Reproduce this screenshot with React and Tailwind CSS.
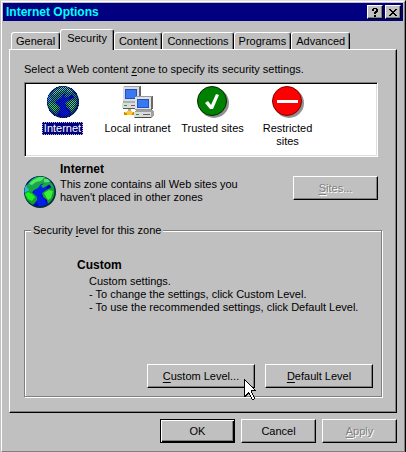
import React, { useState } from 'react';
import clsx from 'clsx';

const tabs = ['General', 'Security', 'Content', 'Connections', 'Programs', 'Advanced'];

const Globe = ({ selected = false }) => (
  <svg width="32" height="32" viewBox="0 0 32 32" aria-hidden="true">
    <defs>
      <pattern id="dither" width="2" height="2" patternUnits="userSpaceOnUse">
        <path d="M0 0h1v1H0zM1 1h1v1H1z" fill="#000080" />
      </pattern>
      <clipPath id="globe-clip">
        <circle cx="15.5" cy="15.5" r="15" />
      </clipPath>
    </defs>
    <circle cx="16" cy="16" r="16" fill="#003030" />
    <circle cx="15.5" cy="15.5" r="15" fill="#0000c0" />
    <g clipPath="url(#globe-clip)">
      <path d="M17 8l5 2 1 3-4 3-2 4 4 4 2 5-8 2-3-7-2-4 0-6 3-5z" fill="#0020e8" />
      <path d="M0 9l5 0 4 3-2 4-7 1z" fill="#30b8d8" />
      <path d="M2 10l5-6 6-4 8 0 7 4-4 3-7 1-3 4-4 2-3 4-4-1 2-3z" fill="#18a848" />
      <path d="M5 8l4-4 6-3 6 0-4 4-5 1-4 3z" fill="#50e860" />
      <path d="M20 3l4 0 3 3-3 1-4-1z" fill="#60d880" />
      <path d="M0 18l3-3 5 1 3 3 2 2 0 3-2 3-2 2-4-2-5-5z" fill="#10a030" />
      <path d="M1 18l3-2 4 2 3 3-3 4-4-2z" fill="#20f020" />
      <path d="M17 10l3-3 5-1 1 2-3 2-4 2z" fill="#18a848" />
      <path d="M18 17l4-3 6-3 4 3 0 8-5 6-3 1-1-5-4-3z" fill="#18a030" />
      <path d="M20 17l5-3 4 1-2 7-3 2-2-3z" fill="#38f038" />
      <path d="M25 5l5 4 1 4-3-1-3-4z" fill="#18a848" />
    </g>
    {selected && <circle cx="16" cy="16" r="16" fill="url(#dither)" shapeRendering="crispEdges" />}
  </svg>
);

const Intranet = () => (
  <svg width="32" height="32" viewBox="0 0 32 32" shapeRendering="crispEdges" aria-hidden="true">
    <path d="M1 1l2-1h15l1 1v13l-2 2H1z" fill="#a0a0a0" />
    <path d="M1 1h16v14H1z" fill="#dcdcdc" />
    <path d="M17 1l2-1v14l-2 2z" fill="#686868" />
    <path d="M3 3h12v10H3z" fill="#2050c8" />
    <path d="M4 4h10v8H4z" fill="#3878f0" />
    <path d="M0 17l2-2h17v7H0z" fill="#b0b0b0" />
    <path d="M0 17h16v5H0z" fill="#dcdcdc" />
    <path d="M0 22h17v1H1z" fill="#585858" />
    <path d="M2 19h3v1H2z" fill="#18a040" />
    <path d="M9 19h6v1H9z" fill="#606060" />
    <path d="M6 23h3v3H6z" fill="#a8a8a8" />
    <path d="M2 26h10v3H2z" fill="#c89000" />
    <path d="M3 26h8v1H3zM5 25h5v4H5z" fill="#ffc830" />
    <path d="M13 11l2-1h15l1 1v11l-2 2H13z" fill="#989898" />
    <path d="M13 11h16v12H13z" fill="#e0e0e0" />
    <path d="M29 11l2-1v12l-2 2z" fill="#686868" />
    <path d="M15 13h12v9H15z" fill="#2050c8" />
    <path d="M16 14h10v7H16z" fill="#3878f0" />
    <path d="M12 26l3-2h15l2 1v4l-3 3H12z" fill="#a0a0a0" />
    <path d="M12 26h17v5H12z" fill="#dcdcdc" />
    <path d="M12 31h17v1H13z" fill="#484848" />
    <path d="M14 28h3v1h-3z" fill="#18a040" />
    <path d="M21 28h7v1h-7z" fill="#606060" />
  </svg>
);

const Trusted = () => (
  <svg width="32" height="32" viewBox="0 0 32 32" aria-hidden="true">
    <circle cx="17" cy="17" r="15" fill="#909090" />
    <circle cx="15" cy="15" r="14.5" fill="#008000" stroke="#002800" />
    <path d="M8 17l3-2 3 4 5-11 3 1-6 14h-3z" fill="#fff" />
  </svg>
);

const Restricted = () => (
  <svg width="32" height="32" viewBox="0 0 32 32" aria-hidden="true">
    <circle cx="17" cy="17" r="15" fill="#909090" />
    <circle cx="15" cy="15" r="14.5" fill="#ff0000" stroke="#800000" />
    <path d="M5 14h21v3H5z" fill="#fff" />
  </svg>
);

const zones = [
  { name: 'Internet', icon: <Globe selected /> },
  { name: 'Local intranet', icon: <Intranet /> },
  { name: 'Trusted sites', icon: <Trusted /> },
  { name: 'Restricted sites', icon: <Restricted /> },
];

const Button = ({ className, children, ...props }) => (
  <button
    type="button"
    className={clsx(
      'h-6 border border-t-white border-l-white border-r-black border-b-black bg-[#c0c0c0] shadow-[inset_-1px_-1px_#808080]',
      'disabled:text-[#808080] disabled:[text-shadow:1px_1px_#fff]',
      className
    )}
    {...props}
  >
    {children}
  </button>
);

const Key = ({ children }) => <span className="underline underline-offset-2">{children}</span>;

const TitleButton = ({ label, children }) => (
  <button
    type="button"
    aria-label={label}
    className="flex h-3.5 w-4 items-center justify-center border border-t-white border-l-white border-r-black border-b-black bg-[#c0c0c0] shadow-[inset_-1px_-1px_#808080]"
  >
    {children}
  </button>
);

export default function App() {
  const [tab, setTab] = useState('Security');
  const [zone, setZone] = useState('Internet');

  return (
    <div className="min-h-screen w-full cursor-default border border-t-[#dfdfdf] border-l-[#c0c0c0] border-r-black border-b-black bg-[#c0c0c0] font-['Liberation_Sans',Arial,sans-serif] text-[11px] leading-[13px] text-black">
      <div className="min-h-[450px] border border-t-white border-l-white border-r-[#808080] border-b-[#808080] p-px">
        <header className="flex h-[18px] items-center bg-[#000080] pr-0.5 pl-[3px]">
          <h1 className="flex-1 text-[12px] font-bold text-[#00ffff]">Internet Options</h1>
          <div className="flex gap-0.5">
            <TitleButton label="Help">
              <svg width="8" height="9" viewBox="0 0 8 9" shapeRendering="crispEdges">
                <path d="M1 1h1V0h4v1h1v3H6v1H5v1H3V4h1V3h1V1H3v2H1zM3 7h2v2H3z" />
              </svg>
            </TitleButton>
            <TitleButton label="Close">
              <svg width="8" height="7" viewBox="0 0 8 7" shapeRendering="crispEdges">
                <path d="M0 0h2v1h1v1h2V1h1V0h2v1H7v1H6v1H5v1h1v1h1v1h1v1H6V6H5V5H3v1H2v1H0V6h1V5h1V4h1V3H2V2H1V1H0z" />
              </svg>
            </TitleButton>
          </div>
        </header>

        <main className="px-1.5 pt-2">
          <div role="tablist" className="flex items-end pl-0.5">
            {tabs.map(name => (
              <button
                key={name}
                type="button"
                role="tab"
                aria-selected={tab === name}
                onClick={() => setTab(name)}
                className={clsx(
                  'rounded-t-[3px] border-t border-r border-l border-t-white border-r-black border-l-white bg-[#c0c0c0] shadow-[inset_-1px_0_#808080]',
                  tab === name ? 'relative z-10 -mb-px h-[21px] px-1.5 pb-1' : 'h-[17px] px-1'
                )}
              >
                {name}
              </button>
            ))}
          </div>

          <section className="border border-t-white border-l-white border-r-black border-b-black px-3.5 pt-[13px] pb-[15px] shadow-[inset_-1px_-1px_#808080]">
            <p id="zone-label">
              Select a Web content <Key>z</Key>one to specify its security settings.
            </p>
            <div
              role="listbox"
              aria-labelledby="zone-label"
              className="mt-1.5 mr-1 flex h-[75px] border border-t-[#808080] border-l-[#808080] border-r-white border-b-white bg-white pt-[3px] shadow-[inset_1px_1px_#000,inset_-1px_-1px_#dfdfdf]"
            >
              {zones.map(({ name, icon }) => (
                <button
                  key={name}
                  type="button"
                  role="option"
                  aria-selected={zone === name}
                  onClick={() => setZone(name)}
                  className="flex w-[75px] flex-col items-center gap-1"
                >
                  {icon}
                  <span
                    className={clsx(
                      'px-0.5',
                      name === 'Restricted sites' && 'w-14',
                      zone === name && 'bg-[#000080] text-white outline-1 outline-dotted outline-[#c0c0c0] -outline-offset-1'
                    )}
                  >
                    {name}
                  </span>
                </button>
              ))}
            </div>

            <h2 className="mt-1.5 pl-9 text-[12px] font-bold">Internet</h2>
            <div className="mr-1 flex items-start gap-1">
              <Globe />
              <p className="flex-1 pt-0.5">
                This zone contains all Web sites you
                <br />
                haven't placed in other zones
              </p>
              <Button disabled className="w-[85px]">
                <Key>S</Key>ites...
              </Button>
            </div>

            <fieldset className="mt-4 border border-[#808080] pr-2 pb-2 pl-1.5 shadow-[1px_1px_#fff,inset_1px_1px_#fff]">
              <legend className="bg-[#c0c0c0] px-0.5">
                Security <Key>l</Key>evel for this zone
              </legend>
              <div className="pt-[22px] pl-[46px]">
                <h3 className="text-[12px] font-bold">Custom</h3>
                <div className="pt-[3px] pl-3">
                  <p>Custom settings.</p>
                  <p>- To change the settings, click Custom Level.</p>
                  <p>- To use the recommended settings, click Default Level.</p>
                </div>
              </div>
              <div className="mt-[50px] flex justify-end gap-2.5">
                <div className="relative">
                  <Button className="w-[108px]">
                    <Key>C</Key>ustom Level...
                  </Button>
                  <svg
                    className="pointer-events-none absolute top-[15px] left-[97px]"
                    width="12"
                    height="21"
                    viewBox="0 0 12 21"
                    shapeRendering="crispEdges"
                    aria-hidden="true"
                  >
                    <path d="M0 0h1v1h1v1h1v1h1v1h1v1h1v1h1v1h1v1h1v1h1v1h1v1h1v1H8v2h1v2h1v2h1v2h-1v1H8v-1H7v-2H6v-2H5v-1H4v1H3v1H2v1H0z" />
                    <path d="M1 2h1v1h1v1h1v1h1v1h1v1h1v1h1v1h1v1h1v1H7v3h1v2h1v2h1v2H8v-2H7v-2H6v-2H5v-1H4v1H3v1H2v1H1z" fill="#fff" />
                  </svg>
                </div>
                <Button className="w-[108px]">
                  <Key>D</Key>efault Level
                </Button>
              </div>
            </fieldset>
          </section>

          <footer className="flex justify-end gap-1.5 pt-1.5 pb-[7px]">
            <button
              type="button"
              className="h-6 w-[75px] border border-black bg-[#c0c0c0] shadow-[inset_1px_1px_#fff,inset_-1px_-1px_#000,inset_-2px_-2px_#808080]"
            >
              OK
            </button>
            <Button className="w-[75px]">Cancel</Button>
            <Button disabled className="w-[75px]">
              <Key>A</Key>pply
            </Button>
          </footer>
        </main>
      </div>
    </div>
  );
}
